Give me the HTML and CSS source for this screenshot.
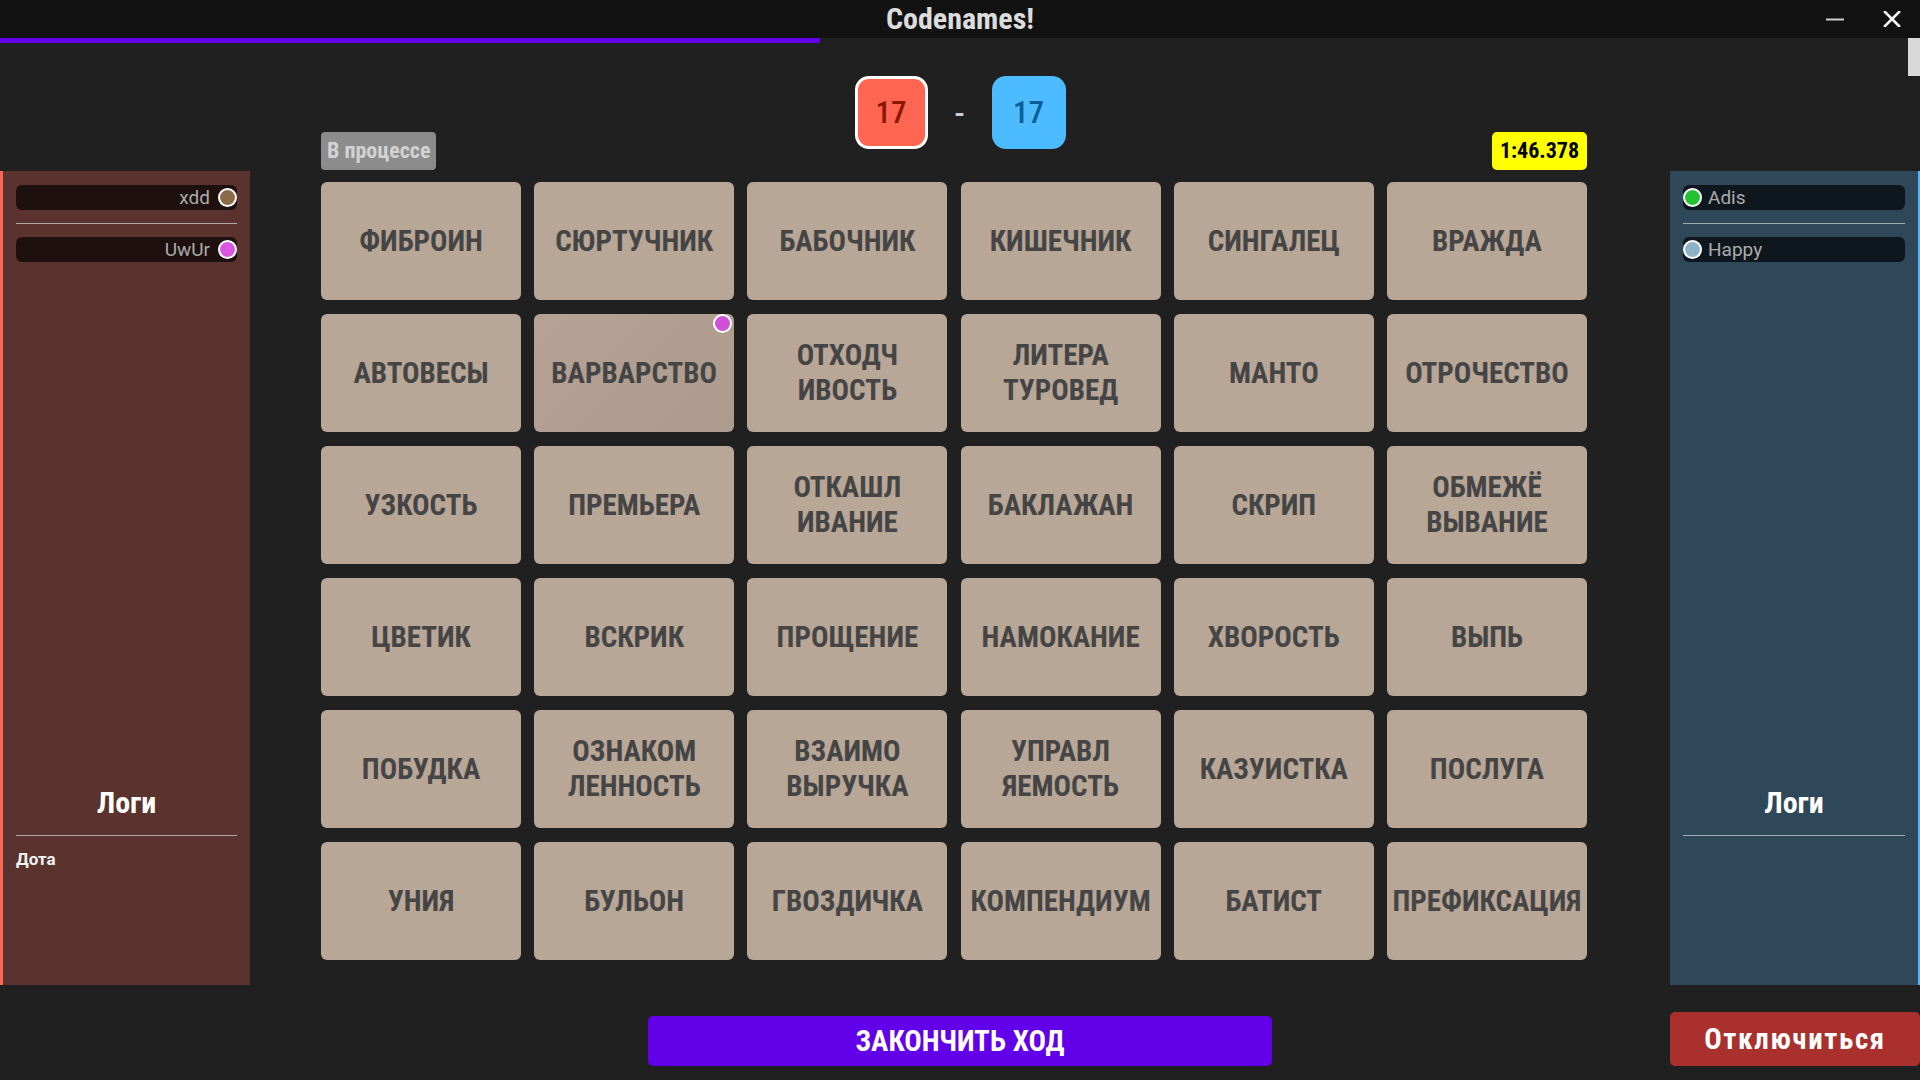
FILE: index.html
```html
<!DOCTYPE html>
<html lang="ru">
<head>
<meta charset="utf-8">
<title>Codenames!</title>
<link rel="stylesheet" href="styles.css">
</head>
<body>
<header class="titlebar">
  <div class="titlebar-side"></div>
  <h1 class="app-title">Codenames!</h1>
  <div class="window-controls">
    <button class="win-btn" aria-label="Свернуть">
      <svg width="20" height="20" viewBox="0 0 20 20"><path d="M1 10.5h18" stroke="#cfcfcf" stroke-width="2"/></svg>
    </button>
    <button class="win-btn" aria-label="Закрыть">
      <svg width="18" height="16" viewBox="0 0 18 16"><path d="M2 1l14 14M16 1L2 15" stroke="#f2f2f2" stroke-width="2.6" stroke-linecap="square"/></svg>
    </button>
  </div>
</header>
<div class="progress"><div class="progress-fill" style="width: 42.7%"></div></div>
<div class="scroll-thumb"></div>

<main class="layout">
  <aside class="team team-red">
    <ul class="players">
      <li class="player"><span class="player-name">xdd</span><span class="dot dot-brown"></span></li>
      <li class="sep"></li>
      <li class="player"><span class="player-name">UwUr</span><span class="dot dot-pink"></span></li>
    </ul>
    <section class="logs">
      <h2 class="logs-title">Логи</h2>
      <div class="logs-sep"></div>
      <p class="log-line">Дота</p>
    </section>
  </aside>

  <section class="center">
    <div class="board-head">
      <span class="status">В процессе</span>
      <div class="score">
        <span class="score-box score-red">17</span>
        <span class="score-dash">-</span>
        <span class="score-box score-blue">17</span>
      </div>
      <span class="timer">1:46.378</span>
    </div>

    <div class="board">
      <div class="card">ФИБРОИН</div>
      <div class="card">СЮРТУЧНИК</div>
      <div class="card">БАБОЧНИК</div>
      <div class="card">КИШЕЧНИК</div>
      <div class="card">СИНГАЛЕЦ</div>
      <div class="card">ВРАЖДА</div>

      <div class="card">АВТОВЕСЫ</div>
      <div class="card card-hover">ВАРВАРСТВО<span class="card-mark"></span></div>
      <div class="card">ОТХОДЧ<br>ИВОСТЬ</div>
      <div class="card">ЛИТЕРА<br>ТУРОВЕД</div>
      <div class="card">МАНТО</div>
      <div class="card">ОТРОЧЕСТВО</div>

      <div class="card">УЗКОСТЬ</div>
      <div class="card">ПРЕМЬЕРА</div>
      <div class="card">ОТКАШЛ<br>ИВАНИЕ</div>
      <div class="card">БАКЛАЖАН</div>
      <div class="card">СКРИП</div>
      <div class="card">ОБМЕЖЁ<br>ВЫВАНИЕ</div>

      <div class="card">ЦВЕТИК</div>
      <div class="card">ВСКРИК</div>
      <div class="card">ПРОЩЕНИЕ</div>
      <div class="card">НАМОКАНИЕ</div>
      <div class="card">ХВОРОСТЬ</div>
      <div class="card">ВЫПЬ</div>

      <div class="card">ПОБУДКА</div>
      <div class="card">ОЗНАКОМ<br>ЛЕННОСТЬ</div>
      <div class="card">ВЗАИМО<br>ВЫРУЧКА</div>
      <div class="card">УПРАВЛ<br>ЯЕМОСТЬ</div>
      <div class="card">КАЗУИСТКА</div>
      <div class="card">ПОСЛУГА</div>

      <div class="card">УНИЯ</div>
      <div class="card">БУЛЬОН</div>
      <div class="card">ГВОЗДИЧКА</div>
      <div class="card">КОМПЕНДИУМ</div>
      <div class="card">БАТИСТ</div>
      <div class="card">ПРЕФИКСАЦИЯ</div>
    </div>

    <button class="end-turn">ЗАКОНЧИТЬ ХОД</button>
  </section>

  <div class="right-col">
    <aside class="team team-blue">
      <ul class="players">
        <li class="player"><span class="dot dot-green"></span><span class="player-name">Adis</span></li>
        <li class="sep"></li>
        <li class="player"><span class="dot dot-grey"></span><span class="player-name">Happy</span></li>
      </ul>
      <section class="logs">
        <h2 class="logs-title">Логи</h2>
        <div class="logs-sep"></div>
      </section>
    </aside>
    <button class="disconnect">Отключиться</button>
  </div>
</main>
</body>
</html>
```

FILE: styles.css
```css
* { box-sizing: border-box; }

html, body {
  margin: 0;
  padding: 0;
  height: 100%;
}

body {
  background: #202020;
  color: #eee;
  font-family: "Roboto Condensed", "Roboto", "Liberation Sans", sans-serif;
  font-stretch: 87.5%;
  overflow: hidden;
  position: relative;
}

/* ---------- title bar ---------- */
.titlebar {
  height: 38px;
  background: #121212;
  display: grid;
  grid-template-columns: 1fr auto 1fr;
  align-items: center;
}

.app-title {
  margin: 0;
  font-size: 30px;
  font-weight: 700;
  color: #dcdcdc;
  line-height: 38px;
}

.window-controls {
  justify-self: end;
  display: flex;
  height: 38px;
}

.win-btn {
  width: 57px;
  height: 38px;
  border: 0;
  padding: 0;
  background: transparent;
  display: flex;
  align-items: center;
  justify-content: center;
}

.progress {
  height: 5px;
  background: #202020;
}

.progress-fill {
  height: 100%;
  background: #6200ea;
}

.scroll-thumb {
  position: absolute;
  top: 38px;
  right: 0;
  width: 12px;
  height: 38px;
  background: #d9d9d9;
}

/* ---------- main layout ---------- */
.layout {
  display: grid;
  grid-template-columns: 250px 1fr 250px;
  height: calc(100% - 43px);
}

.team {
  margin-top: 128px;
  height: 814px;
  display: flex;
  flex-direction: column;
  padding: 14px 13px 0 13px;
}

.team-red {
  background: #5a322e;
  border-left: 3px solid #ff6651;
}

.team-blue {
  background: #2e4759;
  border-right: 2px solid #4db8ff;
}

.players {
  list-style: none;
  margin: 0;
  padding: 0;
  flex: 1;
}

.player {
  height: 25px;
  border-radius: 6px;
  display: flex;
  align-items: center;
  gap: 8px;
  font-family: "Roboto", "Liberation Sans", sans-serif;
  font-stretch: 100%;
  font-size: 19px;
  color: #ababab;
}

.team-red .player {
  background: #1e100f;
  justify-content: flex-end;
}

.team-blue .player {
  background: #0f171e;
  gap: 6px;
}

.sep {
  height: 1px;
  margin: 13px 0;
  background: rgba(205, 205, 205, 0.75);
}

.dot {
  width: 19px;
  height: 19px;
  border-radius: 50%;
  border: 2px solid #fff;
  flex: none;
}

.dot-brown { background: #8a6a48; }
.dot-pink { background: #d957e0; }
.dot-green { background: #22c232; }
.dot-grey { background: #8fb2c6; }

.logs {
  height: 200px;
  flex: none;
}

.logs-title {
  margin: 0;
  text-align: center;
  font-size: 30px;
  line-height: 36px;
  font-weight: 700;
  color: #fff;
}

.logs-sep {
  height: 1px;
  margin-top: 14px;
  background: rgba(205, 205, 205, 0.75);
}

.log-line {
  margin: 13px 0 0;
  font-family: "Roboto", "Liberation Sans", sans-serif;
  font-stretch: 100%;
  font-size: 17px;
  line-height: 20px;
  font-weight: 700;
  color: #f4f4f4;
}

/* ---------- center ---------- */
.center {
  display: flex;
  flex-direction: column;
  align-items: center;
  padding-top: 33px;
}

.board-head {
  width: 1266px;
  height: 94px;
  margin-right: 12px;
  display: grid;
  grid-template-columns: 1fr auto 1fr;
}

.status {
  justify-self: start;
  align-self: end;
  height: 38px;
  padding: 0 6px;
  border-radius: 4px;
  background: #8c8c8c;
  color: #d2d2d2;
  font-size: 22px;
  font-weight: 700;
  line-height: 38px;
}

.score {
  align-self: start;
  margin-left: 12px;
  display: flex;
  align-items: center;
  gap: 19px;
}

.score-box {
  width: 73px;
  height: 73px;
  border-radius: 14px;
  display: flex;
  align-items: center;
  justify-content: center;
  font-size: 31px;
  font-weight: 500;
}

.score-red {
  background: #ff6651;
  border: 3px solid #fff;
  color: #8a1706;
}

.score-blue {
  width: 74px;
  background: #4dbbff;
  color: #0b5e94;
}

.score-dash {
  width: 26px;
  text-align: center;
  font-size: 38px;
  color: #cfcfcf;
  line-height: 1;
}

.timer {
  justify-self: end;
  align-self: end;
  height: 38px;
  width: 95px;
  border-radius: 5px;
  background: #ffff00;
  color: #000;
  font-size: 22px;
  font-weight: 700;
  line-height: 38px;
  text-align: center;
}

.board {
  margin-top: 12px;
  margin-right: 12px;
  display: grid;
  grid-template-columns: repeat(6, 200px);
  grid-auto-rows: 118px;
  column-gap: 13.2px;
  row-gap: 14px;
}

.card {
  position: relative;
  background: #b8a697;
  border-radius: 6px;
  display: flex;
  align-items: center;
  justify-content: center;
  text-align: center;
  color: #454545;
  font-size: 29px;
  line-height: 35px;
  font-weight: 700;
  white-space: nowrap;
}

.card-hover {
  background: linear-gradient(135deg, #b5a295, #ad9b8e);
}

.card-mark {
  position: absolute;
  top: 0;
  right: 2px;
  width: 19px;
  height: 19px;
  border-radius: 50%;
  border: 2px solid #fff;
  background: #d24fd8;
}

.end-turn {
  margin-top: 56px;
  width: 624px;
  height: 50px;
  border: 0;
  border-radius: 5px;
  background: #6200ea;
  color: #fff;
  font-family: inherit;
  font-stretch: inherit;
  font-size: 29px;
  font-weight: 700;
}

/* ---------- right column ---------- */
.right-col {
  display: flex;
  flex-direction: column;
}

.disconnect {
  margin-top: 27px;
  height: 54px;
  border: 0;
  border-radius: 5px;
  background: #a9302d;
  color: #fff;
  font-family: inherit;
  font-stretch: inherit;
  font-size: 29px;
  font-weight: 700;
  letter-spacing: 1.6px;
}
```
